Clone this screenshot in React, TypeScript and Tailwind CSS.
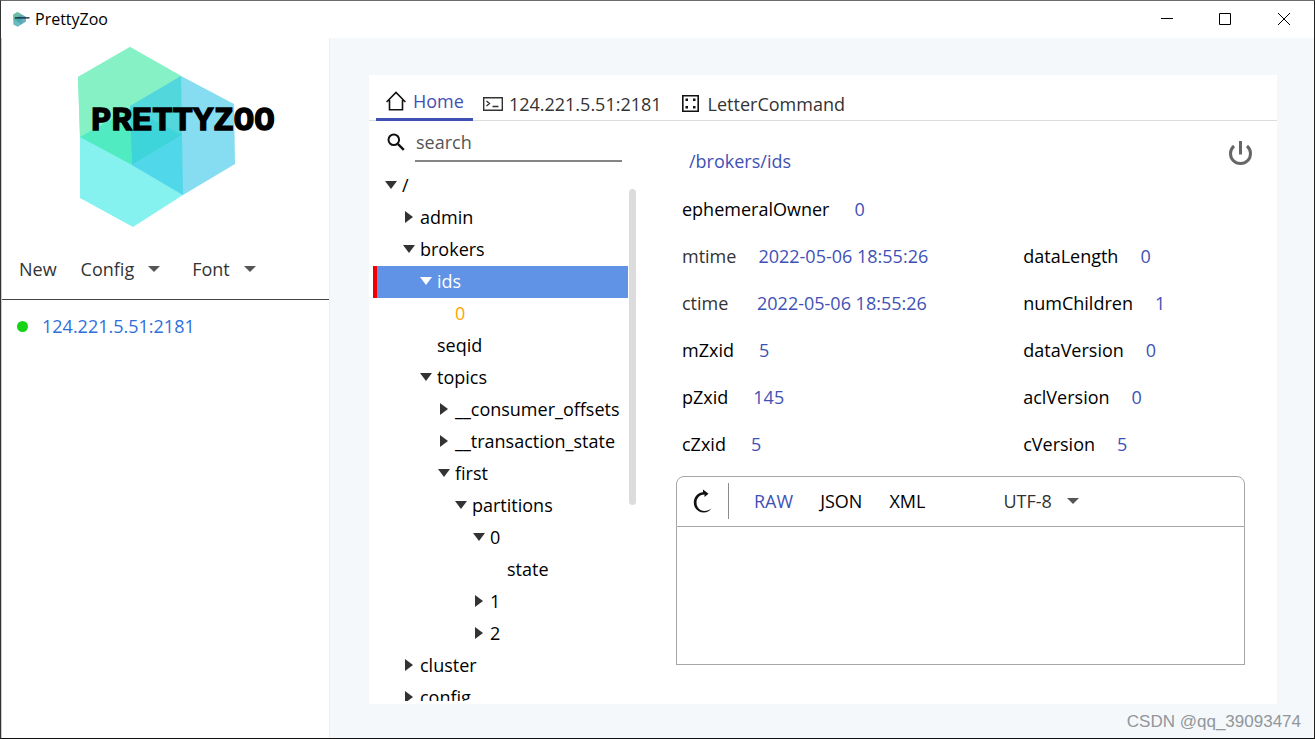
import React from "react";

type TreeRow = {
  label: string;
  level: number;
  state?: "open" | "closed";
  selected?: boolean;
  ephemeral?: boolean;
};

const rows: TreeRow[] = [
  { label: "/", level: 0, state: "open" },
  { label: "admin", level: 1, state: "closed" },
  { label: "brokers", level: 1, state: "open" },
  { label: "ids", level: 2, state: "open", selected: true },
  { label: "0", level: 3, ephemeral: true },
  { label: "seqid", level: 2 },
  { label: "topics", level: 2, state: "open" },
  { label: "__consumer_offsets", level: 3, state: "closed" },
  { label: "__transaction_state", level: 3, state: "closed" },
  { label: "first", level: 3, state: "open" },
  { label: "partitions", level: 4, state: "open" },
  { label: "0", level: 5, state: "open" },
  { label: "state", level: 6 },
  { label: "1", level: 5, state: "closed" },
  { label: "2", level: 5, state: "closed" },
  { label: "cluster", level: 1, state: "closed" },
  { label: "config", level: 1, state: "closed" },
];

const indents = ["pl-3", "pl-[30px]", "pl-[47px]", "pl-[65px]", "pl-[82px]", "pl-[100px]", "pl-[117px]"];

type Stat = { label: string; value: string; date?: boolean };

const leftStats: Stat[] = [
  { label: "mtime", value: "2022-05-06 18:55:26", date: true },
  { label: "ctime", value: "2022-05-06 18:55:26", date: true },
  { label: "mZxid", value: "5" },
  { label: "pZxid", value: "145" },
  { label: "cZxid", value: "5" },
];

const rightStats: Stat[] = [
  { label: "dataLength", value: "0" },
  { label: "numChildren", value: "1" },
  { label: "dataVersion", value: "0" },
  { label: "aclVersion", value: "0" },
  { label: "cVersion", value: "5" },
];

function Hexagons() {
  return (
    <>
      <polygon points="52,1 103,30 105,90 54,119 2,91 0,31" fill="#86f1c5" />
      <polygon points="2,91 52,62 104,89 105,149 55,181 2,152" fill="#85f2ef" />
      <polygon points="103,30 156,58 157,118 105,149 54,119 52,60" fill="#86dcf0" />
      <polygon points="0,31 52,1 103,30 52,60 52,63 2,91" fill="#86f1c5" />
      <polygon points="2,91 52,63 54,119" fill="#50ebc0" />
      <polygon points="103,30 104,89 54,119 52,60" fill="#52d7dc" />
      <polygon points="52,62 104,89 54,119" fill="#3ed5da" />
      <polygon points="104,89 105,149 54,119" fill="#50d8ea" />
    </>
  );
}

function Logo() {
  return (
    <svg className="ml-[76px] h-[184px] w-[204px]" viewBox="0 0 204 184" role="img" aria-label="PrettyZoo">
      <Hexagons />
      <text
        x="13"
        y="84"
        fontFamily="'Liberation Mono', monospace"
        fontWeight="700"
        fontSize="34"
        fill="#000"
        stroke="#000"
        strokeWidth="1.4"
      >
        PRETTYZOO
      </text>
    </svg>
  );
}

function Caret({ className }: { className?: string }) {
  return (
    <svg className={className} width="12" height="6" viewBox="0 0 12 6" fill="#555" aria-hidden="true">
      <path d="M0 0h12L6 6z" />
    </svg>
  );
}

function TreeArrow({ state, light }: { state: "open" | "closed"; light?: boolean }) {
  return (
    <svg width="12" height="12" viewBox="0 0 12 12" fill={light ? "#fff" : "#333"} aria-hidden="true">
      {state === "open" ? <path d="M0 2h12L6 10z" /> : <path d="M2 0l8 6-8 6z" />}
    </svg>
  );
}

function TitleBar() {
  return (
    <header className="flex h-[37px] shrink-0 items-center bg-white pl-3 text-black">
      <svg width="17" height="15" viewBox="0 0 204 184" aria-hidden="true">
        <Hexagons />
        <polygon points="52,1 156,58 157,118 55,181 2,152 0,31" fill="#456" opacity="0.35" />
        <rect x="20" y="64" width="180" height="16" fill="#123" />
      </svg>
      <h1 className="ml-[5px] flex-1 pb-0.5 text-base">PrettyZoo</h1>
      <button aria-label="Minimize" className="flex h-full w-[58px] items-center justify-center">
        <svg width="12" height="12" viewBox="0 0 12 12"><path d="M0 4.500h12" stroke="#000" /></svg>
      </button>
      <button aria-label="Maximize" className="flex h-full w-[58px] items-center justify-center pb-0.5">
        <svg width="12" height="12" viewBox="0 0 12 12"><path d="M.5.5h11v11H.5z" fill="none" stroke="#000" /></svg>
      </button>
      <button aria-label="Close" className="flex h-full w-[60px] items-center justify-center pb-0.5">
        <svg width="12" height="12" viewBox="0 0 12 12"><path d="M0 0l12 12M12 0L0 12" stroke="#000" /></svg>
      </button>
    </header>
  );
}

function Sidebar() {
  return (
    <aside className="w-[329px] shrink-0 border-r border-l border-r-[#eee] border-l-[#ccc] bg-white pt-2">
      <Logo />
      <div className="flex h-[70px] items-center border-b border-[#444] pt-[9px] pl-[17px] text-[#333]">
        <button>New</button>
        <button className="ml-6 flex items-center gap-[14px]">
          Config
          <Caret />
        </button>
        <button className="ml-8 flex items-center gap-[14px]">
          Font
          <Caret />
        </button>
      </div>
      <ul>
        <li>
          <button className="flex h-[52px] w-full items-center gap-[14px] pl-[15px] text-[#2f6fdb]">
            <span className="size-[11px] rounded-full bg-[#16d316]" />
            124.221.5.51:2181
          </button>
        </li>
      </ul>
    </aside>
  );
}

function Tabs() {
  return (
    <nav className="flex h-[46px] shrink-0 border-b border-[#dcdcdc] pl-[7px] text-[#333]">
      <button className="-mb-px flex items-center gap-[7px] border-b-[3px] border-[#3f51b5] pt-2 pr-[9px] pl-[10px] text-[#3f51b5]">
        <svg width="20" height="20" viewBox="0 0 20 20" fill="none" stroke="#111" strokeWidth="1.600" aria-hidden="true">
          <path d="M.6 11L10 1.500 19.400 11M3.500 9v9.700h13V9" />
        </svg>
        Home
      </button>
      <button className="flex items-center gap-[6px] pt-3 pl-[10px]">
        <svg width="20" height="16" viewBox="0 0 20 16" fill="none" stroke="#333" strokeWidth="1.400" aria-hidden="true">
          <path d="M.7 1.700h18.600v12.600H.7zM3.500 5l3 2.500-3 2.500M9.500 10.500h6" />
        </svg>
        124.221.5.51:2181
      </button>
      <button className="flex items-center gap-[9px] pt-3 pl-5">
        <svg width="17" height="17" viewBox="0 0 17 17" aria-hidden="true">
          <path d="M.8.8h15.400v15.400H.8z" fill="none" stroke="#111" strokeWidth="1.600" />
          <path d="M3.500 3.500h2.500V6H3.500zM11 3.500h2.500V6H11zM3.500 11h2.500v2.500H3.500zM11 11h2.500v2.500H11z" fill="#111" />
        </svg>
        LetterCommand
      </button>
    </nav>
  );
}

function NodeTree() {
  return (
    <section className="flex w-[267px] shrink-0 flex-col pb-[3px]">
      <label className="flex h-[49px] shrink-0 pl-[18px]">
        <svg className="mt-3" width="18" height="18" viewBox="0 0 18 18" fill="none" stroke="#111" aria-hidden="true">
          <circle cx="6.800" cy="6.800" r="5.300" strokeWidth="2" />
          <path d="M10.800 10.800l6 6" strokeWidth="2.400" />
        </svg>
        <input
          type="text"
          aria-label="search"
          placeholder="search"
          className="ml-[10px] h-[41px] w-[207px] border-b-2 border-[#858585] bg-transparent px-px pt-0.5 outline-none placeholder:text-[#555]"
        />
      </label>
      <div className="flex min-h-0 flex-1">
        <ul className="min-w-0 flex-1 overflow-hidden pl-1">
          {rows.map((row, i) => (
            <li key={i}>
              <button
                className={`flex h-8 w-full items-center gap-[5px] pb-0.5 ${indents[row.level]} ${
                  row.selected
                    ? "bg-[#6092e6] text-white shadow-[inset_4px_0_0_#f00000]"
                    : row.ephemeral
                      ? "text-[#ffa500]"
                      : "text-black"
                }`}
              >
                {row.state ? <TreeArrow state={row.state} light={row.selected} /> : <span className="w-3" />}
                {row.label}
              </button>
            </li>
          ))}
        </ul>
        <div className="mt-[19px] ml-px h-[316px] w-[7px] rounded-full bg-[#dcdcdc]" />
      </div>
    </section>
  );
}

function StatRow({ stat, gap }: { stat: Stat; gap: string }) {
  return (
    <div className={`flex h-[47px] items-center ${stat.date ? "gap-[22px]" : gap}`}>
      <dt className={stat.date ? "min-w-[53px] text-[#333]" : "text-black"}>{stat.label}</dt>
      <dd className="text-[#3f51b5]">{stat.value}</dd>
    </div>
  );
}

function NodeDetail() {
  return (
    <section className="ml-10 flex min-w-0 flex-1 flex-col pr-8 pb-[39px]">
      <div className="flex h-16 shrink-0 items-start justify-between pl-[13px]">
        <h2 className="pt-7 text-[#3f51b5]">/brokers/ids</h2>
        <button aria-label="Disconnect" className="-mr-2 pt-5">
          <svg width="25" height="25" viewBox="0 0 25 25" fill="none" stroke="#666" strokeWidth="3" aria-hidden="true">
            <path d="M12.500 0v13.500M6 5A10 10 0 1 0 19 5" />
          </svg>
        </button>
      </div>
      <dl className="pl-[6px]">
        <StatRow stat={{ label: "ephemeralOwner", value: "0" }} gap="gap-[25px]" />
        <div className="grid grid-cols-[60fr_39fr]">
          <div>
            {leftStats.map((s) => (
              <StatRow key={s.label} stat={s} gap="gap-[25px]" />
            ))}
          </div>
          <div>
            {rightStats.map((s) => (
              <StatRow key={s.label} stat={s} gap="gap-[22px]" />
            ))}
          </div>
        </div>
      </dl>
      <div className="mt-[9px] flex min-h-0 flex-1 flex-col">
        <div className="flex h-[51px] shrink-0 items-center rounded-t-lg border border-[#a6a6a6] pb-0.5 pl-4 text-black">
          <button aria-label="Refresh">
            <svg width="19" height="24" viewBox="0 0 19 24" aria-hidden="true">
              <path d="M10 3.200V.5l5.500 4.300L11.500 8V5.600C7 5.600 3.500 9 3.500 13.500c0 5 3.500 8.500 8 8.500 2.600 0 4.800-.9 6.900-2.700-1.900 2.900-4.400 4.200-7.600 4.200C5 23.500.8 19.200.8 13.500.8 8 4.600 3.600 10 3.200z" fill="#111" />
            </svg>
          </button>
          <div className="ml-4 h-9 w-px bg-[#8c8c8c]" />
          <div className="ml-[25px] flex gap-[27px]">
            <button className="text-[#3f51b5]">RAW</button>
            <button>JSON</button>
            <button>XML</button>
          </div>
          <div className="relative ml-[78px] flex items-center">
            <select aria-label="Charset" className="appearance-none bg-transparent pr-[27px] text-[#333] outline-none">
              <option>UTF-8</option>
            </select>
            <Caret className="pointer-events-none absolute right-0" />
          </div>
        </div>
        <textarea
          aria-label="Node data"
          className="block min-h-0 w-full flex-1 resize-none border border-t-0 border-[#a6a6a6] p-2 outline-none"
        />
      </div>
    </section>
  );
}

export default function App() {
  return (
    <div className="relative flex h-screen flex-col border border-t-[#6b6b6b] border-r-[#222] border-b-[#111] border-l-[#333] bg-[#f4f8fb] font-['Open_Sans','Noto_Sans',sans-serif] text-lg leading-6">
      <TitleBar />
      <div className="flex min-h-0 flex-1">
        <Sidebar />
        <main className="flex min-w-0 flex-1 pt-[37px] pr-[37px] pb-[34px] pl-[39px]">
          <div className="flex min-w-0 flex-1 flex-col bg-white">
            <Tabs />
            <div className="flex min-h-0 flex-1">
              <NodeTree />
              <NodeDetail />
            </div>
          </div>
        </main>
      </div>
      <p className="absolute right-[13px] bottom-1 font-['Liberation_Sans',sans-serif] text-[17px] text-[#92969a]">
        CSDN @qq_39093474
      </p>
    </div>
  );
}
